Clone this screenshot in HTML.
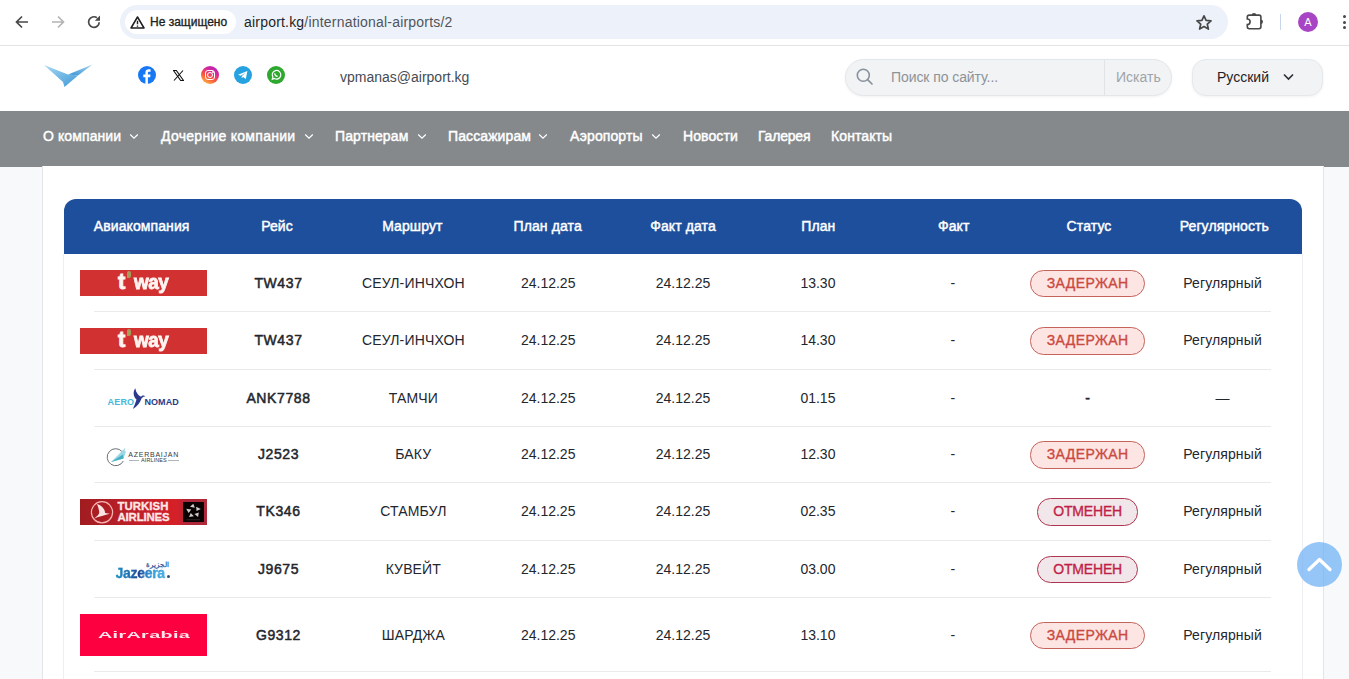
<!DOCTYPE html>
<html><head><meta charset="utf-8"><style>
*{margin:0;padding:0;box-sizing:border-box}
html,body{width:1349px;height:679px;overflow:hidden;background:#f8f9fb;font-family:"Liberation Sans",sans-serif;position:relative}
div,span,svg{position:absolute}
.t{white-space:nowrap}
#chrome{left:0;top:0;width:1349px;height:46px;background:#fff;border-bottom:1px solid #e3e3e3}
#urlbar{left:120px;top:5px;width:1108px;height:34px;border-radius:17px;background:#edf2fa}
#chip{left:5px;top:5px;width:111px;height:24px;border-radius:12px;background:#fff}
#chiptxt{left:25px;top:0;line-height:24px;font-size:12px;color:#1f1f1f;-webkit-text-stroke:0.35px #1f1f1f}
#url{left:124px;top:0;line-height:34px;font-size:14px;color:#1f1f1f;letter-spacing:0.2px}
#header{left:0;top:46px;width:1349px;height:65px;background:#fff}
#nav{left:0;top:111px;width:1349px;height:56px;background:#85898c}
.navi{top:0;line-height:51px;font-size:14px;color:#fff;-webkit-text-stroke:0.45px #fff;letter-spacing:0.1px}
.chev{top:22px}
#container{left:42px;top:166px;width:1282px;height:520px;background:#fff;border-left:1px solid #e3e5e8;border-right:1px solid #e3e5e8}
#tbl{left:63px;top:254px;width:1240px;height:440px;background:#fff;border-left:1px solid #eceef1;border-right:1px solid #eceef1}
#thead{left:64px;top:199px;width:1238px;height:55px;background:#1e4f9c;border-radius:12px 12px 0 0}
.th{top:0;width:135.333px;text-align:center;line-height:55px;font-size:14px;color:#fff;-webkit-text-stroke:0.45px #fff;letter-spacing:0.1px}
.sep{left:94px;width:1177px;height:1px;background:#e9eaec}
.td{width:134.86px;text-align:center;font-size:14px;color:#23262d}
.b{-webkit-text-stroke:0.5px #23262d}
.badge{height:27px;line-height:24px;border-radius:13.5px;font-size:14px;border:1px solid #c5625a;background:#fde5e3;color:#cb4a3f;-webkit-text-stroke:0.35px #cb4a3f;text-align:center;letter-spacing:0.4px}
.badge.c{border-color:#ae3550;background:#f1e6e9;color:#c21f46;-webkit-text-stroke:0.35px #c21f46;letter-spacing:-0.2px}
</style></head><body>
<div id="chrome">
<svg style="left:14px;top:14px" width="16" height="16" viewBox="0 0 16 16"><path d="M14 8H3M8 2.5L2.5 8L8 13.5" fill="none" stroke="#474747" stroke-width="1.7"/></svg>
<svg style="left:50px;top:14px" width="16" height="16" viewBox="0 0 16 16"><path d="M2 8H13M8 2.5L13.5 8L8 13.5" fill="none" stroke="#b4b4b4" stroke-width="1.7"/></svg>
<svg style="left:86px;top:14px" width="16" height="16" viewBox="0 0 16 16"><path d="M10.9 3.7A5.3 5.3 0 1 0 13.2 8.2" fill="none" stroke="#474747" stroke-width="1.7"/><path d="M14 1.6V6.8H8.8Z" fill="#474747"/></svg>
<div id="urlbar"><div id="chip"><svg style="left:5px;top:6px" width="15" height="13" viewBox="0 0 15 13"><path d="M7.5 1L14 12H1Z" fill="none" stroke="#1f1f1f" stroke-width="1.5" stroke-linejoin="round"/><path d="M7.5 4.8V8.3M7.5 9.6V10.8" stroke="#1f1f1f" stroke-width="1.4"/></svg><span id="chiptxt" class="t">Не защищено</span></div><span id="url" class="t">airport.kg<span style="position:static;color:#50555a">/international-airports/2</span></span><svg style="left:1075px;top:8.5px" width="18" height="18" viewBox="0 0 18 18"><path d="M9 1.8L11.1 6.4L16 6.9L12.3 10.2L13.4 15.1L9 12.6L4.6 15.1L5.7 10.2L2 6.9L6.9 6.4Z" fill="none" stroke="#474747" stroke-width="1.7" stroke-linejoin="round"/></svg></div>
<svg style="left:1240px;top:8px" width="30" height="26" viewBox="1240 8 30 26"><path d="M1249.3 15.1H1259Q1260.9 15.1 1260.9 17V26.8Q1260.9 28.7 1259 28.7H1249.3Q1247.3 28.7 1247.3 26.8V24.6A2.8 2.8 0 0 0 1247.3 19V17Q1247.3 15.1 1249.3 15.1Z" fill="none" stroke="#474747" stroke-width="1.6"/><path d="M1251.7 15.3A2.3 2.3 0 0 1 1256.3 15.3Z M1260.7 19.5A2.3 2.3 0 0 1 1260.7 24.1Z" fill="#474747"/></svg>
<div style="left:1280px;top:14px;width:1px;height:16px;background:#c7d6ea"></div>
<div style="left:1298px;top:12px;width:20px;height:20px;border-radius:10px;background:#a845c4;color:#fff;font-size:11px;line-height:20px;text-align:center">A</div>
<div style="left:1342.5px;top:15px;width:3.2px;height:3.2px;border-radius:2px;background:#474747"></div>
<div style="left:1342.5px;top:20.5px;width:3.2px;height:3.2px;border-radius:2px;background:#474747"></div>
<div style="left:1342.5px;top:26px;width:3.2px;height:3.2px;border-radius:2px;background:#474747"></div>
</div>
<div id="header"></div>
<svg style="left:40px;top:60px" width="56" height="30" viewBox="40 60 56 30"><defs><linearGradient id="lg1" x1="0" y1="0" x2="1" y2="1"><stop offset="0" stop-color="#a9d8f2"/><stop offset="1" stop-color="#3d9ad8"/></linearGradient><linearGradient id="lg2" x1="0" y1="1" x2="1" y2="0"><stop offset="0" stop-color="#3b95d6"/><stop offset="1" stop-color="#9fd3f0"/></linearGradient></defs><path d="M44 65L68 74.5L78 75.5L64.5 87L63 82Z" fill="url(#lg1)"/><path d="M92.5 64.5L68 74.5L78 75.5Z" fill="url(#lg2)"/></svg>
<div style="left:138px;top:66px;width:18px;height:18px;border-radius:9px;background:#1877f2"></div>
<svg style="left:138px;top:66px" width="18" height="18" viewBox="0 0 18 18"><path d="M9.9 18V11.2H12.2L12.5 8.6H9.9V7C9.9 6.2 10.2 5.7 11.3 5.7H12.6V3.4C12.3 3.3 11.5 3.3 10.7 3.3C8.8 3.3 7.4 4.4 7.4 6.6V8.6H5.3V11.2H7.4V18Z" fill="#fff"/></svg>
<svg style="left:173px;top:70px" width="11" height="11" viewBox="0 0 11 11"><path d="M0.5 0.5H3.3L10.5 10.5H7.7Z" fill="none" stroke="#111" stroke-width="1.1"/><path d="M10 0.5L1 10.5" stroke="#111" stroke-width="1.1"/></svg>
<div style="left:201px;top:66px;width:18px;height:18px;border-radius:9px;background:linear-gradient(30deg,#ffd54a 0%,#fa5a3a 38%,#d6249f 68%,#9b2fc2 100%)"></div>
<div style="left:205px;top:70px;width:10px;height:10px;border-radius:3px;border:1.3px solid #fff"></div>
<div style="left:207px;top:72px;width:6px;height:6px;border-radius:3px;border:1.2px solid #fff"></div><div style="left:212.3px;top:71.2px;width:1.4px;height:1.4px;border-radius:1px;background:#fff"></div>
<div style="left:234px;top:66px;width:18px;height:18px;border-radius:9px;background:#27a2e0"></div>
<svg style="left:234px;top:66px" width="18" height="18" viewBox="0 0 18 18"><path d="M4 8.8L13.4 5L11.8 12.9L9.1 11L7.6 12.3L7.9 10.1L12 6.4L6.8 9.7Z" fill="#fff"/></svg>
<div style="left:267px;top:66px;width:18px;height:18px;border-radius:9px;background:#2fa82f"></div>
<svg style="left:267px;top:66px" width="18" height="18" viewBox="0 0 18 18"><path d="M5.3 13.2L5.9 11.1A4.3 4.3 0 1 1 7.4 12.5Z" fill="none" stroke="#fff" stroke-width="1.2"/><path d="M7.6 7.3C7.8 8.8 9 10.1 10.6 10.4" stroke="#fff" stroke-width="1.2" fill="none"/></svg>
<span class="t" style="left:340px;top:67px;line-height:20px;font-size:14px;color:#454b52">vpmanas@airport.kg</span>
<div style="left:845px;top:59px;width:327px;height:37px;border-radius:18.5px;background:#f1f3f5;border:1px solid #e4e7ea;box-shadow:0 1px 3px rgba(0,0,0,0.06)"></div>
<svg style="left:855px;top:67px" width="20" height="20" viewBox="0 0 20 20"><circle cx="8.3" cy="8.3" r="6" fill="none" stroke="#8a939c" stroke-width="1.6"/><path d="M12.6 12.6L17 17" stroke="#8a939c" stroke-width="1.7" stroke-linecap="round"/></svg>
<span class="t" style="left:891px;top:67px;line-height:20px;font-size:14px;color:#8e9297;letter-spacing:-0.08px">Поиск по сайту...</span>
<div style="left:1104px;top:60px;width:1px;height:35px;background:#e1e4e7"></div>
<span class="t" style="left:1116px;top:67px;line-height:20px;font-size:14px;color:#a0a4a8">Искать</span>
<div style="left:1192px;top:59px;width:131px;height:37px;border-radius:14px;background:#f1f3f5;border:1px solid #e6e9ec;box-shadow:0 1px 3px rgba(0,0,0,0.06)"></div>
<span class="t" style="left:1217px;top:67px;line-height:20px;font-size:14px;color:#1e2226">Русский</span>
<svg style="left:1282px;top:72px" width="13" height="10" viewBox="0 0 13 10"><path d="M2 2.5L6.5 7L11 2.5" fill="none" stroke="#2a2e33" stroke-width="1.6"/></svg>
<div id="nav">
<span class="navi t" style="left:43px;">О компании</span>
<svg class="chev" style="left:129px" width="10" height="7" viewBox="0 0 10 7"><path d="M1.2 1.5L5 5.2L8.8 1.5" fill="none" stroke="#fff" stroke-width="1.2"/></svg>
<span class="navi t" style="left:161px;letter-spacing:0.28px;">Дочерние компании</span>
<svg class="chev" style="left:304px" width="10" height="7" viewBox="0 0 10 7"><path d="M1.2 1.5L5 5.2L8.8 1.5" fill="none" stroke="#fff" stroke-width="1.2"/></svg>
<span class="navi t" style="left:335px;">Партнерам</span>
<svg class="chev" style="left:417px" width="10" height="7" viewBox="0 0 10 7"><path d="M1.2 1.5L5 5.2L8.8 1.5" fill="none" stroke="#fff" stroke-width="1.2"/></svg>
<span class="navi t" style="left:448px;">Пассажирам</span>
<svg class="chev" style="left:538px" width="10" height="7" viewBox="0 0 10 7"><path d="M1.2 1.5L5 5.2L8.8 1.5" fill="none" stroke="#fff" stroke-width="1.2"/></svg>
<span class="navi t" style="left:570px;">Аэропорты</span>
<svg class="chev" style="left:651px" width="10" height="7" viewBox="0 0 10 7"><path d="M1.2 1.5L5 5.2L8.8 1.5" fill="none" stroke="#fff" stroke-width="1.2"/></svg>
<span class="navi t" style="left:683px;">Новости</span>
<span class="navi t" style="left:758px;letter-spacing:-0.2px;">Галерея</span>
<span class="navi t" style="left:831px;">Контакты</span>
</div>
<div id="container"></div>
<div id="tbl"></div>
<div id="thead">
<span class="th t" style="left:10.00px">Авиакомпания</span>
<span class="th t" style="left:145.33px">Рейс</span>
<span class="th t" style="left:280.67px">Маршрут</span>
<span class="th t" style="left:416.00px">План дата</span>
<span class="th t" style="left:551.33px">Факт дата</span>
<span class="th t" style="left:686.66px">План</span>
<span class="th t" style="left:822.00px">Факт</span>
<span class="th t" style="left:957.33px">Статус</span>
<span class="th t" style="left:1092.66px">Регулярность</span>
</div>
<div style="left:80px;top:270px;width:127px;height:26px;background:#d23131"><span class="t" style="left:38px;top:-1.5px;font-size:22px;line-height:26px;font-weight:bold;color:#fff4f0;-webkit-text-stroke:0.9px #fff4f0">t</span><div style="left:46.5px;top:1px;width:4.5px;height:6.5px;border-radius:2.5px 2.5px 2.5px 0;background:#a89a58"></div><span class="t" style="left:54px;top:-1px;font-size:21px;line-height:26px;font-weight:bold;color:#fff4f0;-webkit-text-stroke:0.9px #fff4f0;transform:scaleX(0.9);transform-origin:0 0;letter-spacing:-0.6px">way</span></div>
<span class="td t b" style="left:211.06px;top:272.87px;line-height:20px;letter-spacing:0.6px">TW437</span>
<span class="td t" style="left:345.92px;top:272.87px;line-height:20px;letter-spacing:0.15px">СЕУЛ-ИНЧХОН</span>
<span class="td t" style="left:480.78px;top:272.87px;line-height:20px">24.12.25</span>
<span class="td t" style="left:615.64px;top:272.87px;line-height:20px">24.12.25</span>
<span class="td t" style="left:750.50px;top:272.87px;line-height:20px">13.30</span>
<span class="td t" style="left:885.36px;top:272.87px;line-height:20px">-</span>
<div class="badge t" style="left:1030.15px;top:270px;height:27px;width:115px">ЗАДЕРЖАН</div>
<span class="td t" style="left:1155.08px;top:272.87px;line-height:20px;letter-spacing:0.12px">Регулярный</span>
<div class="sep" style="top:311px"></div>
<div style="left:80px;top:328px;width:127px;height:26px;background:#d23131"><span class="t" style="left:38px;top:-1.5px;font-size:22px;line-height:26px;font-weight:bold;color:#fff4f0;-webkit-text-stroke:0.9px #fff4f0">t</span><div style="left:46.5px;top:1px;width:4.5px;height:6.5px;border-radius:2.5px 2.5px 2.5px 0;background:#a89a58"></div><span class="t" style="left:54px;top:-1px;font-size:21px;line-height:26px;font-weight:bold;color:#fff4f0;-webkit-text-stroke:0.9px #fff4f0;transform:scaleX(0.9);transform-origin:0 0;letter-spacing:-0.6px">way</span></div>
<span class="td t b" style="left:211.06px;top:329.97px;line-height:20px;letter-spacing:0.6px">TW437</span>
<span class="td t" style="left:345.92px;top:329.97px;line-height:20px;letter-spacing:0.15px">СЕУЛ-ИНЧХОН</span>
<span class="td t" style="left:480.78px;top:329.97px;line-height:20px">24.12.25</span>
<span class="td t" style="left:615.64px;top:329.97px;line-height:20px">24.12.25</span>
<span class="td t" style="left:750.50px;top:329.97px;line-height:20px">14.30</span>
<span class="td t" style="left:885.36px;top:329.97px;line-height:20px">-</span>
<div class="badge t" style="left:1030.15px;top:327px;height:28px;width:115px">ЗАДЕРЖАН</div>
<span class="td t" style="left:1155.08px;top:329.97px;line-height:20px;letter-spacing:0.12px">Регулярный</span>
<div class="sep" style="top:369px"></div>
<span class="t" style="left:107.5px;top:398px;font-size:9px;line-height:9px;font-weight:bold;color:#45b8dc;letter-spacing:0.2px">AERO</span><svg style="left:130px;top:386px" width="18" height="24" viewBox="0 0 18 24"><path d="M5.3 2.3C2.5 6 3.5 11 6.5 13.5C5.5 17 4.2 20 2.8 23C7 20.5 10 17 11.5 12.5C12.8 11 14 10.5 15.5 10.3L13.8 9.6C12.5 9.4 11.8 10 11 10.8C8 9.5 6 6.5 5.3 2.3Z" fill="#2b3a8c"/></svg><span class="t" style="left:144.5px;top:398px;font-size:9px;line-height:9px;font-weight:bold;color:#2b3a86;letter-spacing:0.05px">NOMAD</span>
<span class="td t b" style="left:211.06px;top:388.07px;line-height:20px;letter-spacing:0.6px">ANK7788</span>
<span class="td t" style="left:345.92px;top:388.07px;line-height:20px;letter-spacing:0.15px">ТАМЧИ</span>
<span class="td t" style="left:480.78px;top:388.07px;line-height:20px">24.12.25</span>
<span class="td t" style="left:615.64px;top:388.07px;line-height:20px">24.12.25</span>
<span class="td t" style="left:750.50px;top:388.07px;line-height:20px">01.15</span>
<span class="td t" style="left:885.36px;top:388.07px;line-height:20px">-</span>
<span class="td t b" style="left:1020.22px;top:388.07px;line-height:20px">-</span>
<span class="td t" style="left:1155.08px;top:388.07px;line-height:20px;letter-spacing:0.12px">—</span>
<div class="sep" style="top:426px"></div>
<svg style="left:105px;top:444.5px" width="30" height="24" viewBox="0 0 30 24"><path d="M17 6.5A8.5 8.5 0 1 0 18.3 16" fill="none" stroke="#5a5f65" stroke-width="0.9"/><path d="M6 17L20.5 2.5L19.5 6L21 6.5L18.5 13.5L6.5 17Z" fill="#9cd8e3"/><path d="M6 17L18 9.5L18.5 13.5Z" fill="#4aaec3"/></svg><span class="t" style="left:128.3px;top:450.5px;font-size:7px;line-height:8px;color:#33383e;letter-spacing:0.75px">AZERBAIJAN</span><div style="left:128.5px;top:460px;width:10.5px;height:1px;background:#b0b5ba"></div><div style="left:168px;top:460px;width:11px;height:1px;background:#b0b5ba"></div><span class="t" style="left:141px;top:457px;font-size:5.5px;line-height:6px;color:#33383e;letter-spacing:0.1px">AIRLINES</span>
<span class="td t b" style="left:211.06px;top:444.37px;line-height:20px;letter-spacing:0.6px">J2523</span>
<span class="td t" style="left:345.92px;top:444.37px;line-height:20px;letter-spacing:0.15px">БАКУ</span>
<span class="td t" style="left:480.78px;top:444.37px;line-height:20px">24.12.25</span>
<span class="td t" style="left:615.64px;top:444.37px;line-height:20px">24.12.25</span>
<span class="td t" style="left:750.50px;top:444.37px;line-height:20px">12.30</span>
<span class="td t" style="left:885.36px;top:444.37px;line-height:20px">-</span>
<div class="badge t" style="left:1030.15px;top:441px;height:28px;width:115px">ЗАДЕРЖАН</div>
<span class="td t" style="left:1155.08px;top:444.37px;line-height:20px;letter-spacing:0.12px">Регулярный</span>
<div class="sep" style="top:482px"></div>
<div style="left:80px;top:499px;width:127px;height:26px;background:linear-gradient(90deg,#a01c20 0%,#c4202a 50%,#d62028 76%,#b0263a 84%,#ad2a3a 100%)"><svg style="left:10px;top:1.5px" width="24" height="23" viewBox="0 0 24 23"><circle cx="12" cy="11.3" r="10.6" fill="none" stroke="#f8b4b4" stroke-width="1.2"/><path d="M7 3.1C10.5 4 15 7.5 15.1 12L19.8 12.7C15 14 9 15.5 4.4 17.4C7 15.5 9 13.5 9.3 11.6C9 8.5 8 5.5 7 3.1Z" fill="#fde4e4"/></svg><span class="t" style="left:37.5px;top:1.8px;font-size:11.4px;line-height:11px;font-weight:bold;color:#fde8e8;-webkit-text-stroke:0.3px #fde8e8;letter-spacing:0.05px">TURKISH</span><span class="t" style="left:37.5px;top:12.7px;font-size:11.4px;line-height:11px;font-weight:bold;color:#fde8e8;-webkit-text-stroke:0.3px #fde8e8;letter-spacing:-0.15px">AIRLINES</span><div style="left:103px;top:2.8px;width:20.5px;height:20px;background:#0a0202"><svg style="left:0;top:0" width="20" height="20" viewBox="0 0 20 20"><path d="M10.3 1.8L7 4.7L11.8 5.8Z M17.8 6.9L13.1 4.7L13.6 9.1Z M15.1 15.1L11.4 12L15.8 10.5Z M6 15.1L7.8 11.1L10.9 14.2Z M3.2 6.7L8.3 7.4L5.6 11.1Z" fill="#cdcdcd"/><path d="M3.5 17.8H17" stroke="#555" stroke-width="0.5"/></svg></div></div>
<span class="td t b" style="left:211.06px;top:501.47px;line-height:20px;letter-spacing:0.6px">TK346</span>
<span class="td t" style="left:345.92px;top:501.47px;line-height:20px;letter-spacing:0.15px">СТАМБУЛ</span>
<span class="td t" style="left:480.78px;top:501.47px;line-height:20px">24.12.25</span>
<span class="td t" style="left:615.64px;top:501.47px;line-height:20px">24.12.25</span>
<span class="td t" style="left:750.50px;top:501.47px;line-height:20px">02.35</span>
<span class="td t" style="left:885.36px;top:501.47px;line-height:20px">-</span>
<div class="badge c t" style="left:1036.90px;top:498px;height:28px;width:101.5px">ОТМЕНЕН</div>
<span class="td t" style="left:1155.08px;top:501.47px;line-height:20px;letter-spacing:0.12px">Регулярный</span>
<div class="sep" style="top:540px"></div>
<span class="t" style="left:146px;top:560.5px;font-size:6.5px;line-height:7px;font-weight:bold;color:#2f5a9c">الجزيرة</span><span class="t" style="left:115.5px;top:566px;font-size:14px;line-height:14px;font-weight:bold;letter-spacing:-0.3px;background:linear-gradient(90deg,#2196c8 0%,#1f6db0 30%,#1e3f8e 47%,#2a7fc8 60%,#37a8e0 76%,#4cb6e8 100%);-webkit-background-clip:text;color:transparent;-webkit-text-stroke:0.3px rgba(30,100,170,0.5)">Jazeera</span><div style="left:166.5px;top:575px;width:3px;height:3px;border-radius:2px;background:#3b4f6e"></div>
<span class="td t b" style="left:211.06px;top:559.07px;line-height:20px;letter-spacing:0.6px">J9675</span>
<span class="td t" style="left:345.92px;top:559.07px;line-height:20px;letter-spacing:0.15px">КУВЕЙТ</span>
<span class="td t" style="left:480.78px;top:559.07px;line-height:20px">24.12.25</span>
<span class="td t" style="left:615.64px;top:559.07px;line-height:20px">24.12.25</span>
<span class="td t" style="left:750.50px;top:559.07px;line-height:20px">03.00</span>
<span class="td t" style="left:885.36px;top:559.07px;line-height:20px">-</span>
<div class="badge c t" style="left:1036.90px;top:556px;height:27px;width:101.5px">ОТМЕНЕН</div>
<span class="td t" style="left:1155.08px;top:559.07px;line-height:20px;letter-spacing:0.12px">Регулярный</span>
<div class="sep" style="top:597px"></div>
<div style="left:80px;top:614px;width:127px;height:42px;background:#fc0040"><span class="t" style="left:17.8px;top:15.5px;font-size:8.6px;line-height:11px;font-weight:bold;color:#ffe6ec;transform:scaleX(2.3);transform-origin:0 0;letter-spacing:0.15px">AirArabia</span></div>
<span class="td t b" style="left:211.06px;top:625.17px;line-height:20px;letter-spacing:0.6px">G9312</span>
<span class="td t" style="left:345.92px;top:625.17px;line-height:20px;letter-spacing:0.15px">ШАРДЖА</span>
<span class="td t" style="left:480.78px;top:625.17px;line-height:20px">24.12.25</span>
<span class="td t" style="left:615.64px;top:625.17px;line-height:20px">24.12.25</span>
<span class="td t" style="left:750.50px;top:625.17px;line-height:20px">13.10</span>
<span class="td t" style="left:885.36px;top:625.17px;line-height:20px">-</span>
<div class="badge t" style="left:1030.15px;top:622px;height:27px;width:115px">ЗАДЕРЖАН</div>
<span class="td t" style="left:1155.08px;top:625.17px;line-height:20px;letter-spacing:0.12px">Регулярный</span>
<div class="sep" style="top:671px"></div>
<div style="left:1297px;top:542px;width:45px;height:45px;border-radius:23px;background:rgba(110,176,245,0.72)"></div>
<svg style="left:1297px;top:542px" width="45" height="45" viewBox="0 0 45 45"><path d="M12 27.5L22.5 17.5L33 27.5" fill="none" stroke="#fff" stroke-width="3.3" stroke-linecap="round" stroke-linejoin="round"/></svg>
</body></html>
